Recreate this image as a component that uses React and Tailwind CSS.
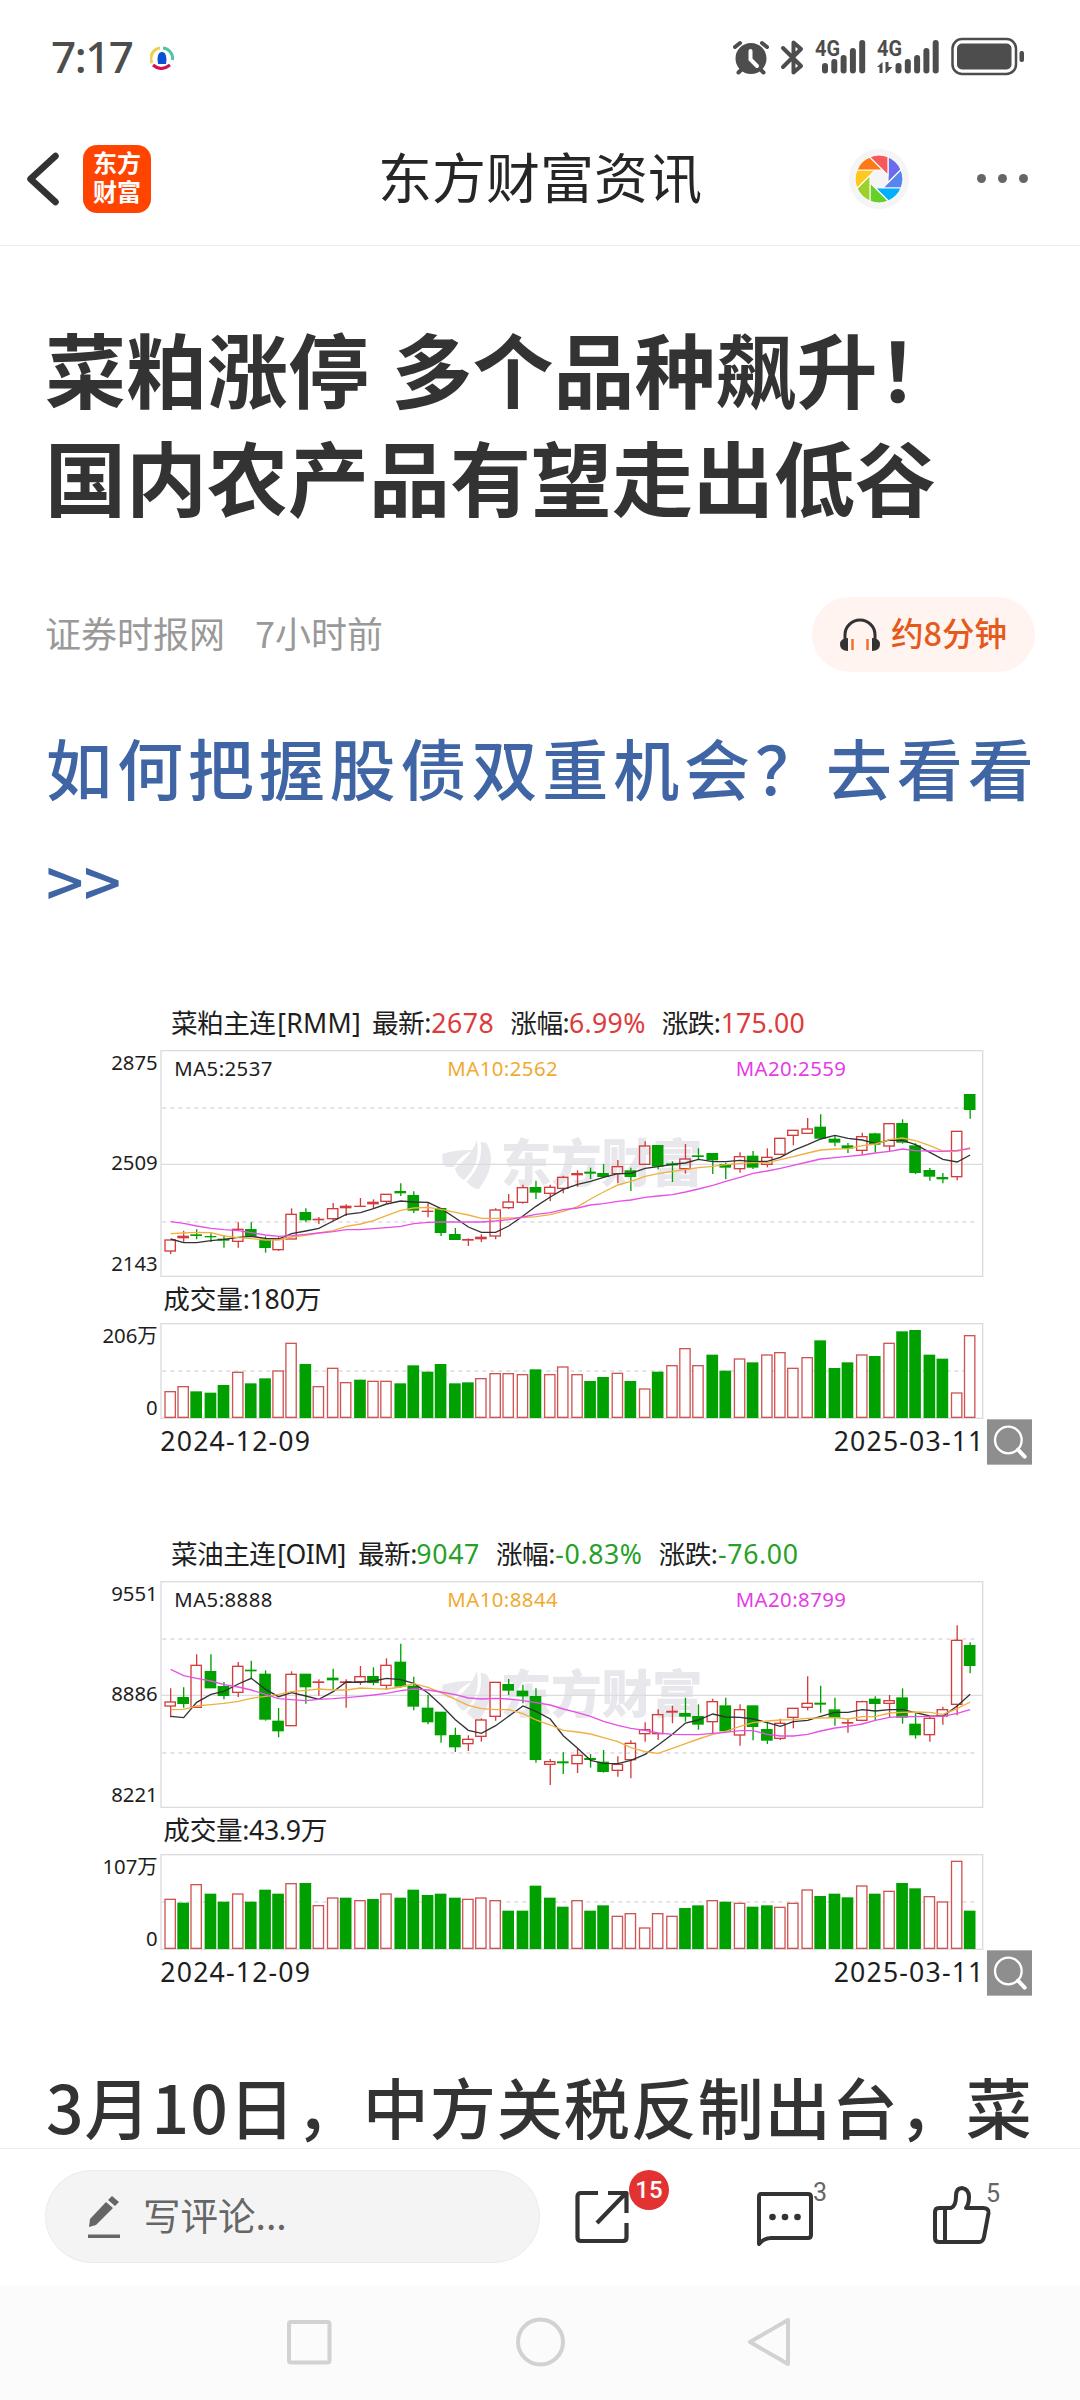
import React from 'react';

const RED = '#d23c3c';
const GREEN = '#00a000';

// Every candle: [up/down, high, body top, body bottom, low]
// Every volume bar: [up/down, top]
const rapeseedMeal = {
  name: '菜粕主连',
  code: '[RMM]',
  codeWidth: 250,
  color: '#dc3c3c',
  stats: [
    { label: '最新:', x: 848, value: '2678', vx: 1025, width: 185 },
    { label: '涨幅:', x: 1263, value: '6.99%', vx: 1438, width: 227 },
    { label: '涨跌:', x: 1717, value: '175.00', vx: 1893, width: 250 },
  ],
  axis: ['2875', '2509', '2143'],
  ma: ['MA5:2537', 'MA10:2562', 'MA20:2559'],
  volume: '180万',
  volumeEnd: 690,
  maxVolume: '206万',
  shift: 0,
  candles: [
    ['r', 750, 750, 783, 792], ['r', 722, 738, 744, 755], ['g', 718, 734, 737, 748], ['g', 730, 739, 741, 756],
    ['g', 735, 747, 751, 773], ['r', 697, 718, 754, 773], ['g', 697, 718, 739, 741], ['g', 739, 747, 773, 788],
    ['r', 740, 747, 779, 783], ['r', 655, 673, 747, 747], ['g', 655, 667, 690, 697], ['r', 681, 687, 690, 702],
    ['r', 639, 656, 686, 692], ['r', 643, 648, 654, 678], ['r', 624, 648, 650, 650], ['r', 628, 636, 642, 656],
    ['r', 613, 613, 634, 640], ['g', 580, 604, 609, 618], ['g', 604, 616, 661, 669], ['r', 636, 663, 665, 682],
    ['g', 655, 655, 728, 738], ['g', 714, 733, 749, 749], ['r', 745, 748, 751, 768], ['r', 733, 741, 747, 756],
    ['r', 655, 660, 738, 748], ['r', 612, 636, 653, 657], ['r', 584, 593, 637, 641], ['g', 572, 592, 607, 627],
    ['r', 584, 592, 610, 634], ['r', 557, 562, 595, 610], ['r', 541, 550, 555, 590], ['g', 533, 546, 550, 567],
    ['g', 522, 550, 560, 563], ['r', 510, 530, 551, 580], ['g', 533, 542, 560, 603], ['r', 454, 468, 523, 523],
    ['g', 466, 466, 529, 538], ['g', 514, 521, 525, 576], ['r', 462, 507, 536, 551], ['g', 475, 497, 500, 510],
    ['g', 490, 490, 510, 552], ['g', 518, 523, 532, 568], ['r', 487, 500, 536, 548], ['g', 483, 498, 532, 537],
    ['r', 475, 502, 523, 532], ['r', 443, 445, 493, 493], ['r', 421, 421, 436, 466], ['r', 384, 417, 430, 430],
    ['g', 373, 411, 445, 448], ['g', 435, 447, 457, 469], ['g', 459, 467, 475, 489], ['r', 428, 440, 481, 494],
    ['g', 428, 431, 463, 487], ['r', 401, 401, 468, 483], ['g', 388, 400, 457, 461], ['g', 460, 467, 548, 552],
    ['g', 534, 541, 559, 572], ['g', 549, 562, 567, 580], ['r', 424, 424, 560, 571], ['g', 313, 313, 359, 386],
  ],
  ma5: [747, 758, 758, 752, 748, 742, 739, 745, 747, 731, 723, 715, 693, 673, 668, 656, 642, 633, 636, 637, 656, 684, 711, 727, 727, 708, 678, 649, 621, 598, 583, 574, 562, 551, 550, 535, 530, 523, 519, 508, 515, 515, 511, 515, 514, 502, 481, 464, 447, 436, 445, 450, 460, 450, 451, 464, 487, 508, 516, 495],
  ma10: [731, 729, 727, 728, 738, 743, 746, 750, 750, 741, 736, 729, 722, 709, 702, 692, 677, 661, 654, 652, 658, 667, 675, 685, 685, 684, 683, 680, 674, 664, 650, 627, 606, 585, 574, 559, 551, 544, 539, 533, 529, 524, 520, 518, 518, 509, 500, 489, 480, 477, 476, 467, 462, 449, 444, 452, 467, 483, 484, 473],
  ma20: [695, 700, 708, 715, 719, 722, 728, 735, 739, 737, 733, 729, 725, 719, 719, 716, 713, 709, 701, 697, 696, 696, 696, 696, 693, 689, 681, 673, 668, 659, 654, 645, 641, 634, 630, 622, 618, 614, 606, 597, 586, 574, 562, 550, 543, 535, 526, 516, 507, 503, 499, 495, 489, 484, 477, 482, 483, 484, 481, 476],
  bars: [
    ['r', 364], ['r', 349], ['g', 364], ['g', 368], ['g', 345], ['r', 306], ['g', 340], ['g', 325], ['r', 302], ['r', 219],
    ['g', 282], ['r', 349], ['r', 294], ['r', 337], ['g', 329], ['r', 333], ['r', 333], ['g', 340], ['g', 286], ['g', 305],
    ['g', 282], ['g', 340], ['g', 337], ['r', 325], ['r', 310], ['r', 310], ['r', 313], ['g', 298], ['r', 313], ['r', 290],
    ['r', 313], ['g', 333], ['g', 321], ['r', 309], ['g', 333], ['r', 356], ['g', 305], ['r', 286], ['r', 235], ['r', 286],
    ['g', 254], ['g', 302], ['r', 266], ['g', 277], ['r', 254], ['r', 247], ['r', 294], ['r', 262], ['g', 211], ['g', 294],
    ['g', 277], ['r', 254], ['g', 258], ['r', 219], ['g', 184], ['g', 180], ['g', 254], ['g', 266], ['r', 368], ['r', 196],
  ],
};

const rapeseedOil = {
  name: '菜油主连',
  code: '[OIM]',
  codeWidth: 207,
  color: '#28a028',
  stats: [
    { label: '最新:', x: 806, value: '9047', vx: 980, width: 187 },
    { label: '涨幅:', x: 1220, value: '-0.83%', vx: 1397, width: 258 },
    { label: '涨跌:', x: 1708, value: '-76.00', vx: 1885, width: 238 },
  ],
  axis: ['9551', '8886', '8221'],
  ma: ['MA5:8888', 'MA10:8844', 'MA20:8799'],
  volume: '43.9万',
  volumeEnd: 708,
  maxVolume: '107万',
  shift: 12,
  candles: [
    ['r', 490, 531, 543, 577], ['g', 487, 517, 536, 548], ['r', 388, 421, 547, 547], ['g', 388, 439, 489, 489],
    ['g', 471, 484, 512, 523], ['r', 411, 424, 502, 516], ['g', 407, 435, 438, 459], ['g', 436, 447, 583, 587],
    ['g', 549, 588, 618, 637], ['r', 439, 448, 602, 602], ['g', 447, 447, 486, 536], ['r', 463, 470, 473, 512],
    ['g', 431, 459, 465, 493], ['r', 463, 470, 473, 548], ['r', 423, 455, 470, 480], ['g', 427, 454, 473, 481],
    ['r', 400, 421, 481, 495], ['g', 356, 411, 484, 488], ['g', 455, 483, 544, 556], ['g', 510, 549, 591, 598],
    ['g', 561, 561, 630, 653], ['g', 608, 631, 666, 681], ['r', 631, 643, 656, 678], ['r', 580, 585, 634, 650],
    ['r', 472, 472, 574, 587], ['g', 462, 478, 496, 510], ['g', 479, 498, 513, 535], ['g', 490, 514, 704, 713],
    ['r', 702, 710, 718, 780], ['g', 682, 710, 714, 747], ['r', 670, 691, 716, 744], ['g', 687, 700, 704, 728],
    ['g', 675, 711, 740, 743], ['r', 694, 718, 736, 755], ['r', 646, 655, 704, 760], ['r', 592, 614, 626, 650],
    ['r', 553, 569, 626, 645], ['r', 542, 558, 562, 595], ['g', 518, 565, 574, 590], ['g', 538, 574, 598, 614],
    ['r', 521, 530, 590, 624], ['g', 518, 542, 618, 620], ['r', 538, 554, 630, 662], ['g', 542, 542, 605, 646],
    ['g', 592, 613, 646, 657], ['r', 581, 595, 640, 645], ['r', 550, 550, 577, 610], ['r', 454, 535, 547, 556],
    ['g', 482, 534, 538, 563], ['g', 518, 554, 577, 602], ['r', 582, 592, 595, 623], ['r', 527, 530, 586, 589],
    ['g', 514, 522, 536, 585], ['r', 510, 527, 535, 577], ['g', 490, 518, 577, 596], ['g', 565, 597, 630, 641],
    ['r', 575, 580, 629, 650], ['r', 545, 554, 573, 599], ['r', 301, 346, 538, 571], ['g', 352, 361, 422, 445],
  ],
  ma5: [574, 578, 532, 508, 499, 477, 460, 493, 515, 503, 513, 523, 500, 471, 472, 468, 460, 464, 475, 504, 540, 584, 616, 625, 602, 574, 543, 559, 582, 632, 670, 706, 715, 716, 706, 688, 660, 628, 594, 585, 567, 576, 577, 582, 593, 604, 590, 586, 574, 562, 562, 554, 558, 554, 554, 563, 573, 574, 543, 508],
  ma10: [554, 553, 543, 539, 535, 529, 520, 514, 508, 500, 496, 492, 495, 495, 489, 491, 492, 486, 476, 487, 503, 523, 541, 551, 554, 554, 566, 585, 600, 616, 621, 627, 638, 650, 668, 680, 685, 670, 656, 642, 628, 619, 604, 593, 588, 585, 584, 580, 579, 578, 582, 575, 575, 564, 562, 561, 562, 568, 551, 531],
  ma20: [433, 452, 460, 468, 479, 486, 495, 508, 521, 524, 527, 523, 521, 518, 514, 510, 505, 497, 492, 495, 501, 509, 519, 522, 520, 522, 527, 533, 540, 552, 563, 574, 589, 601, 610, 616, 624, 628, 629, 629, 625, 622, 617, 617, 628, 633, 633, 628, 618, 609, 604, 597, 586, 577, 574, 575, 574, 574, 565, 554],
  bars: [
    ['r', 282], ['g', 293], ['r', 238], ['g', 266], ['g', 290], ['r', 266], ['g', 290], ['g', 254], ['g', 266], ['r', 235],
    ['g', 234], ['r', 301], ['r', 278], ['g', 278], ['r', 286], ['g', 282], ['r', 266], ['g', 278], ['g', 254], ['g', 270],
    ['g', 266], ['g', 278], ['r', 282], ['r', 278], ['r', 286], ['g', 317], ['g', 317], ['g', 242], ['g', 278], ['g', 305],
    ['r', 286], ['g', 317], ['g', 301], ['r', 333], ['r', 325], ['r', 368], ['r', 325], ['r', 333], ['g', 309], ['g', 301],
    ['r', 286], ['g', 290], ['r', 294], ['g', 305], ['g', 301], ['r', 306], ['r', 294], ['r', 254], ['g', 273], ['g', 266],
    ['g', 277], ['r', 242], ['g', 266], ['r', 258], ['g', 234], ['g', 250], ['r', 274], ['r', 290], ['r', 168], ['g', 317],
  ],
};

const barX = (i) => 240 + Math.floor(i * 10.434) * 3.9;
const toPoints = (line) => line.map((y, i) => `${barX(i) + 2},${y}`).join(' ');

const Candle = ({ x, data }) => {
  const [dir, high, top, bottom, low] = data;
  const color = dir === 'r' ? RED : GREEN;
  const height = bottom - top;
  return (
    <g stroke={color} strokeWidth="4">
      <line x1={x + 2} x2={x + 2} y1={high} y2={top} />
      <line x1={x + 2} x2={x + 2} y1={bottom} y2={low} />
      {dir === 'r' && height > 7 ? (
        <rect x={x - 15} y={top} width="31" height={height} fill="none" />
      ) : (
        <rect x={x - 17} y={top - 1} width="35" height={height + 2} fill={color} stroke="none" />
      )}
    </g>
  );
};

const FuturesChart = ({ data }) => (
  <svg
    className="ml-11 block h-[480px] w-[942px] shrink-0 font-['Noto_Sans','Noto_Sans_CJK_SC',sans-serif]"
    viewBox="0 0 2826 1440"
  >
    {/* Watermark */}
    <g fill="#e7e7ec">
      <path d="M1057 492 Q1100 478 1150 480 Q1105 500 1092 530 Q1070 535 1058 522 Z" />
      <path d="M1160 450 Q1150 490 1095 535 Q1100 560 1122 570 Q1175 520 1160 450 Z" />
      <path d="M1172 455 Q1182 520 1130 575 Q1148 595 1166 598 Q1225 520 1190 460 Z" />
      <text x="1232" y="577" fontSize="152" fontWeight="900" textLength="606">东方财富</text>
    </g>

    {/* Grid */}
    <g fill="none" stroke="#dcdce0" strokeWidth="4">
      <rect x="213" y="182" width="2465" height="677" />
      <rect x="213" y="1001" width="2465" height="284" />
      <line x1="213" x2="2678" y1="523" y2="523" />
      <g strokeDasharray="12 12">
        <line x1="217" x2="2664" y1="354" y2="354" />
        <line x1="217" x2="2664" y1="696" y2="696" />
        <line x1="217" x2="2664" y1="1143" y2="1143" />
      </g>
    </g>

    {/* Heading */}
    <g fontSize="80" fill="#1e1e1e">
      <text x="243" y="130" textLength="315">{data.name}</text>
      <text x="562" y="130" textLength={data.codeWidth}>{data.code}</text>
      {data.stats.map((s) => (
        <React.Fragment key={s.label}>
          <text x={s.x - 2} y="130" textLength="178">{s.label}</text>
          <text x={s.vx - 1} y="130" textLength={s.width + 2} fill={data.color}>{s.value}</text>
        </React.Fragment>
      ))}
    </g>

    {/* Axis labels */}
    <g fontSize="61" fill="#1e1e1e" textAnchor="end">
      <text x="203" y="239">{data.axis[0]}</text>
      <text x="203" y="541">{data.axis[1]}</text>
      <text x="203" y="843">{data.axis[2]}</text>
      <text x="203" y="1059">{data.maxVolume}</text>
      <text x="203" y="1274">0</text>
    </g>
    <g fontSize="61">
      <text x="253" y="259" textLength="294" fill="#1e1e1e">{data.ma[0]}</text>
      <text x="1072" y="259" textLength="331" fill="#f0aa32">{data.ma[1]}</text>
      <text x="1937" y="259" textLength="331" fill="#e63ce6">{data.ma[2]}</text>
    </g>

    <g transform={`translate(0 ${data.shift})`}>
      {data.candles.map((c, i) => (
        <Candle key={i} x={barX(i)} data={c} />
      ))}
      <g fill="none" strokeWidth="4">
        <polyline points={toPoints(data.ma5)} stroke="#333" />
        <polyline points={toPoints(data.ma10)} stroke="#f0b040" />
        <polyline points={toPoints(data.ma20)} stroke="#e650e6" />
      </g>
    </g>

    {/* Volume */}
    <g fontSize="80" fill="#1e1e1e">
      <text x="220" y="958" textLength={data.volumeEnd - 216}>成交量:{data.volume}</text>
      <text x="211" y="1382" textLength="449">2024-12-09</text>
      <text x="2231" y="1382" textLength="449">2025-03-11</text>
    </g>
    {data.bars.map(([dir, top], i) => {
      const y = top + 840 + data.shift;
      return dir === 'r' ? (
        <rect key={i} x={barX(i) - 15} y={y + 1} width="31" height={1281 - y} fill="#fff" stroke="#cf5555" strokeWidth="4" />
      ) : (
        <rect key={i} x={barX(i) - 17} y={y} width="35" height={1284 - y} fill={GREEN} />
      );
    })}

    {/* Zoom button */}
    <rect x="2691" y="1288" width="135" height="136" fill="#8e8e8e" />
    <g fill="none" stroke="#fff" strokeLinecap="round">
      <circle cx="2755" cy="1350" r="40" strokeWidth="7" />
      <path d="M2784 1379 L2804 1400" strokeWidth="12" />
    </g>
  </svg>
);

const SIGNAL = [63, 59, 55, 48, 40];

const Signal = ({ x }) => (
  <g>
    {SIGNAL.map((top, i) => (
      <rect key={top} x={x + i * 9.3} y={top} width="6" height={73.5 - top} rx="3" />
    ))}
  </g>
);

const StatusBar = () => (
  <div className="flex h-28 shrink-0 items-center pl-[51px] pr-[54px] text-[#4d4d4d]">
    <span className="w-[83px] font-['Noto_Sans',sans-serif] text-[44px] leading-none font-medium tracking-[-1.5px]">7:17</span>
    <svg className="mt-1 ml-4 size-6" viewBox="0 0 24 24" fill="none" strokeWidth="3">
      <path d="M2 17 A10.5 10.5 0 0 1 10 2" stroke="#ecd04f" />
      <path d="M13 2 A10.5 10.5 0 0 1 22.5 14" stroke="#4fc5a5" />
      <path d="M3 19 Q11 26 20 19" stroke="#cf1450" />
      <path d="M12 6 C8 6 8 10 7.500 13 L8 18 H16 L16.500 13 C16 10 16 6 12 6 Z" fill="#0a50d2" />
    </svg>
    <svg className="mt-0.5 ml-auto h-[42px] w-[293px]" viewBox="733 36 293 42" fill="currentColor">
      {/* Alarm */}
      <circle cx="751" cy="58.500" r="15.500" />
      <g stroke="currentColor" strokeWidth="4" strokeLinecap="round" fill="none">
        <path d="M735 47 L740 43 M767 47 L762 43 M742 69 L738.500 72.500 M760 69 L763.500 72.500" />
        <path d="M750.500 51 V59.500 L757 66" stroke="#fff" />
      </g>
      {/* Bluetooth */}
      <path d="M783 48 L801 66 L793.500 72.500 V42.500 L801 49 L783 67" fill="none" stroke="currentColor" strokeWidth="4" strokeLinecap="round" strokeLinejoin="round" />
      <g className="font-['Roboto',sans-serif]" fontSize="22" fontWeight="700">
        <text x="815" y="56" textLength="25" lengthAdjust="spacingAndGlyphs">4G</text>
        <text x="877" y="56" textLength="25" lengthAdjust="spacingAndGlyphs">4G</text>
      </g>
      <Signal x={822} />
      <path d="M877 67 L882.500 62 V73 H879.500 V67 Z M885.500 62 H888.500 V67 H892.500 L886.500 73 H885.500 Z" />
      <Signal x={895.5} />
      {/* Battery */}
      <rect x="952.500" y="39" width="63.500" height="35" rx="9.500" fill="none" stroke="currentColor" strokeWidth="2.500" />
      <rect x="957" y="43.500" width="54.500" height="26" rx="5" />
      <rect x="1019.500" y="51" width="4.500" height="11" rx="2" />
    </svg>
  </div>
);

const WHEEL = ['#6b6bee', '#5585ee', '#00b0ff', '#66d026', '#9bd12a', '#ffc81e', '#ff7a14', '#f85858'];

const Header = () => (
  <header className="grid h-[134px] shrink-0 grid-cols-[1fr_auto_1fr] items-center border-b border-[#ececec]">
    <div className="flex items-center pl-[26px]">
      <svg className="h-[54px] w-[34px]" viewBox="0 0 34 54" fill="none" stroke="#333" strokeWidth="6.500" strokeLinecap="round" strokeLinejoin="round">
        <path d="M29.500 4 L4.500 27 L29.500 50" />
      </svg>
      <div className="ml-[23px] flex size-[68px] justify-center rounded-[14px] bg-[#ff4400] pt-[2px] text-center text-[24px] leading-[29px] font-bold text-white">
        东方
        <br />
        财富
      </div>
    </div>
    <h1 className="-mt-[5px] text-[54px] leading-none text-[#262626]">东方财富资讯</h1>
    <div className="flex items-center justify-end pr-[52px]">
      <svg className="mr-[68px] size-[60px]" viewBox="-30 -30 60 60">
        <circle r="30" fill="#f5f5f5" />
        {WHEEL.map((color, i) => (
          <path key={color} d="M9 -22.200 A24 24 0 0 1 22.060 -9.330 L9 3.700 Z" fill={color} stroke="#fafafa" strokeWidth="1.200" transform={`rotate(${i * 45})`} />
        ))}
      </svg>
      <div className="flex gap-3">
        <span className="size-[9px] rounded-full bg-[#666]" />
        <span className="size-[9px] rounded-full bg-[#666]" />
        <span className="size-[9px] rounded-full bg-[#666]" />
      </div>
    </div>
  </header>
);

const Article = () => (
  <main className="flex min-h-0 flex-1 flex-col overflow-hidden px-[45px] text-[#333]">
    <h2 className="mt-[67px] shrink-0 text-[81px] leading-[108px] font-bold whitespace-nowrap">
      <span className="[word-spacing:4px]">菜粕涨停 多个品种飙升！</span>
      <br />
      国内农产品有望走出低谷
    </h2>

    <div className="mt-[68px] flex h-[75px] shrink-0 items-center text-[36px] text-[#999]">
      <span className="-mt-[6px]">证券时报网</span>
      <span className="-mt-[6px] ml-[30px]">7小时前</span>
      <div className="ml-auto flex h-[75px] items-center rounded-full bg-[#fff4f0] px-7">
        <svg className="h-[34px] w-10" viewBox="0 0 40 34" fill="none">
          <path d="M5 24 V17 A15 15 0 0 1 35 17 V24" stroke="#333" strokeWidth="3" />
          <path d="M8 20 V33 Q0 33 0 26.500 Q0 20 8 20 Z M32 20 V33 Q40 33 40 26.500 Q40 20 32 20 Z" fill="#333" />
          <path d="M12.500 21 V32 M27.500 21 V32" stroke="#f07030" strokeWidth="2.500" />
        </svg>
        <span className="-mt-1 ml-[11px] text-[32.500px] leading-none font-medium text-[#e5591a]">约8分钟</span>
      </div>
    </div>

    <p className="mt-[38px] ml-px shrink-0 text-[66px] leading-[113px] font-medium whitespace-nowrap text-[#4065a5]">
      <span className="tracking-[4.900px]">如何把握股债双重机会？去看看</span>
      <br />
      &gt;&gt;
    </p>

    <div className="mt-[54px] ml-px flex shrink-0 flex-col gap-[51px]">
      <FuturesChart data={rapeseedMeal} />
      <FuturesChart data={rapeseedOil} />
    </div>

    <p className="mt-14 ml-px shrink-0 text-[66px] leading-[96px] font-medium tracking-[1px] whitespace-nowrap">
      3月10日，中方关税反制出台，菜
    </p>
  </main>
);

const CommentBar = () => (
  <footer className="flex h-[137px] shrink-0 items-center border-t border-[#ebebeb] bg-white pb-px pl-[45px] text-[#333]">
    <div className="flex h-[93px] w-[495px] items-center rounded-full border border-[#ebebeb] bg-[#f4f4f4] pl-[42px] text-[#666]">
      <svg className="h-11 w-8" viewBox="0 0 32 44" fill="currentColor">
        <path d="M1 32 L2 24 L18 7 L25 13 L8 30 Z M20 5 L24 1 L31 7 L27 11 Z" />
        <rect x="0" y="39.500" width="32" height="3.500" />
      </svg>
      <span className="-mt-[5px] ml-[23px] text-[37.500px] leading-none">写评论...</span>
    </div>

    <div className="relative ml-[35px]">
      <svg className="block h-[54px] w-[54px]" viewBox="0 0 54 54" fill="none" stroke="currentColor" strokeWidth="4.200" strokeLinejoin="round">
        <path d="M23 3 H6 Q2.500 3 2.500 6.500 V47.500 Q2.500 51 6 51 H48 Q51.500 51 51.500 47.500 V33" />
        <path d="M33 3 H51.500 V23 M50 4 L22 33" />
      </svg>
      <span className="absolute -top-5 left-[54px] flex size-10 items-center justify-center rounded-full bg-[#e23232] font-['Roboto',sans-serif] text-[24px] font-medium text-white">15</span>
    </div>

    <div className="relative mt-1 ml-[127px]">
      <svg className="block h-[56px] w-[58px]" viewBox="0 0 58 56" fill="none" stroke="currentColor" strokeWidth="4" strokeLinejoin="round">
        <path d="M5 3 H52 Q55 3 55 6 V44 Q55 47 52 47 H15 Q8 47 3 53 V6 Q3 3 5 3 Z" />
        <g fill="currentColor" stroke="none">
          <circle cx="16.500" cy="26" r="3.300" />
          <circle cx="29" cy="26" r="3.300" />
          <circle cx="41.500" cy="26" r="3.300" />
        </g>
      </svg>
      <span className="absolute -top-[14px] left-[57px] font-['Roboto',sans-serif] text-[25px] leading-8 text-[#666]">3</span>
    </div>

    <div className="relative -mt-1 ml-[119px]">
      <svg className="block h-[58px] w-[58px]" viewBox="0 0 58 58" fill="none" stroke="currentColor" strokeWidth="4" strokeLinejoin="round">
        <path d="M13 22 H18 Q23 20 23 10 Q23 2 29 2 Q36 3 36 11 Q36 18 33 22 H50 Q56 22 55.500 27 L51 51 Q50 56 46 56 H6 Q2 56 2 52 V26 Q2 22 6 22 Z M12 22 V56" />
      </svg>
      <span className="absolute -top-[8px] left-[53px] font-['Roboto',sans-serif] text-[25px] leading-8 text-[#666]">5</span>
    </div>
  </footer>
);

const NavBar = () => (
  <nav className="flex h-[115px] shrink-0 items-center justify-center bg-[#fbfbfb] pr-[3px] pb-[2px]">
    <svg className="h-[50px] w-[506px]" viewBox="286 2317 506 50" fill="none" stroke="#d2d2d2" strokeWidth="4" strokeLinejoin="round">
      <rect x="289" y="2322" width="40.500" height="40.500" rx="2" />
      <circle cx="540.500" cy="2342" r="22.500" />
      <path d="M788 2320 V2364 L750 2342 Z" />
    </svg>
  </nav>
);

export default function App() {
  return (
    <div className="flex h-[2400px] w-[1080px] flex-col overflow-hidden bg-white font-['Noto_Sans_CJK_SC',sans-serif]">
      <StatusBar />
      <Header />
      <Article />
      <CommentBar />
      <NavBar />
    </div>
  );
}
